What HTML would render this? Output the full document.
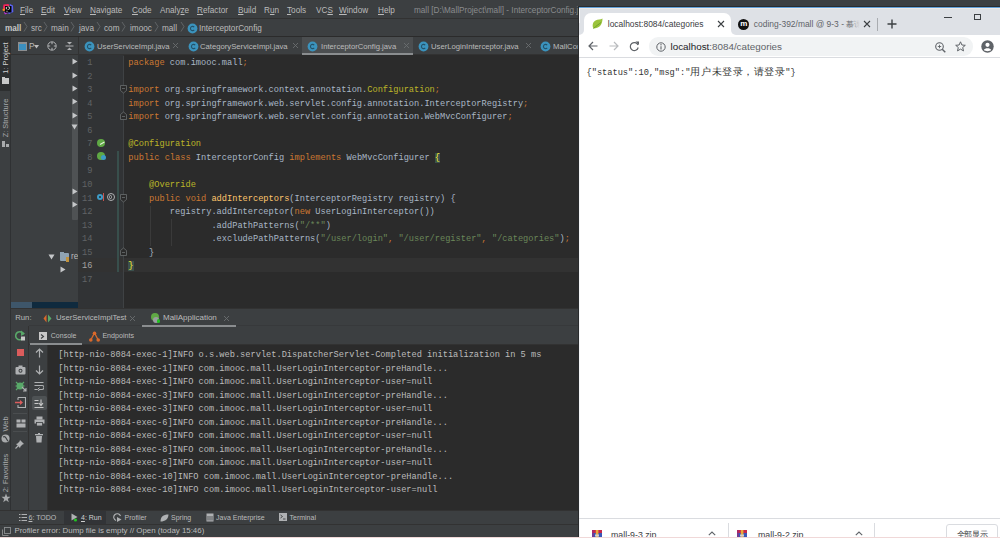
<!DOCTYPE html>
<html><head><meta charset="utf-8">
<style>
*{margin:0;padding:0;box-sizing:border-box}
html,body{width:1000px;height:540px;overflow:hidden;background:#fff}
body{position:relative;font-family:"Liberation Sans",sans-serif;font-size:8px;color:#bbbbbb}
.a{position:absolute}
.t{position:absolute;white-space:pre;line-height:10px}
.mono{font-family:"Liberation Mono",monospace}
/* IDE */
#ide{position:absolute;left:0;top:0;width:579px;height:537px;background:#3c3f41}
#menubar{left:0;top:0;width:1000px;height:19px;background:#3c3f41;border-bottom:1px solid #323232}
#crumbs{left:0;top:19px;width:579px;height:18px;background:#3c3f41;border-bottom:1px solid #2b2b2b}
.mi{top:6px;color:#bbbbbb;font-size:8.2px}
.cr{top:23.5px;color:#bbbbbb;font-size:8.2px}
.chev{top:21px;width:5px;height:10px}
#stripe{left:0;top:37px;width:11px;height:473px;background:#3c3f41;border-right:1px solid #2f3133}
#proj{left:11px;top:37px;width:67px;height:271px;background:#3c3f41}
#tabs{left:78px;top:37px;width:501px;height:18px;background:#3c3f41;border-bottom:1px solid #323232}
#gutter{left:78px;top:55px;width:46px;height:253px;background:#313335}
#editor{left:124px;top:55px;width:455px;height:253px;background:#2b2b2b}
.code{font-family:"Liberation Mono",monospace;font-size:8.667px;line-height:13.56px;white-space:pre;color:#a9b7c6}
.k{color:#cc7832}.an{color:#bbb529}.s{color:#6a8759}.fn{color:#ffc66d}
.brace{background:#3b514d;color:#ffef28}
.ln{font-family:"Liberation Mono",monospace;font-size:8.667px;line-height:13.56px;white-space:pre;color:#606366;text-align:right}
.tab{top:41.5px;font-size:7.7px;color:#bbbbbb}
.cic{width:10px;height:10px;border-radius:50%;background:#3d9cc7;color:#1e3f50;font-size:6px;line-height:10px;text-align:center;font-weight:bold}
.x{color:#6f7375;font-size:9px}
#runhdr{left:11px;top:308px;width:568px;height:18px;background:#3c3f41;border-top:1px solid #323232}
#tb1{left:11px;top:326px;width:18px;height:184px;background:#3c3f41;border-right:1px solid #323232}
#tb2{left:29px;top:345px;width:19px;height:165px;background:#3c3f41;border-right:1px solid #323232}
#conhdr{left:29px;top:325px;width:550px;height:20px;background:#3c3f41;border-bottom:1px solid #323232;border-top:1px solid #37393b}
#console{left:48px;top:345px;width:531px;height:165px;background:#2b2b2b}
.con{font-family:"Liberation Mono",monospace;font-size:8.667px;line-height:13.52px;white-space:pre;color:#bbbbbb}
#bottombar{left:0;top:510px;width:579px;height:14px;background:#3c3f41;border-top:1px solid #323232}
#status{left:0;top:524px;width:579px;height:13px;background:#3c3f41;border-top:1px solid #323232}
</style></head><body>
<div id="ide">
  <div class="a" id="menubar"></div>
  <div class="a" id="crumbs"></div>
  <svg class="a" style="left:1.5px;top:2.5px" width="12" height="12" viewBox="0 0 12 12">
    <path d="M1.5 1.5 L6.5 1 L8 4 L3 7 L1 5 Z" fill="#f5245c"/>
    <circle cx="1.8" cy="6.8" r="1.3" fill="#f98a1d"/>
    <path d="M7.5 0.8 L11 2.5 L11.3 9 L7 11 L5 9 L9 6 Z" fill="#5a62f2"/>
    <path d="M1.8 9 L3 11.5 L6 10 Z" fill="#b838d8"/>
    <rect x="3" y="3" width="6.5" height="6.5" fill="#000"/>
    <rect x="3.8" y="3.9" width="1" height="2.4" fill="#e0e0e0"/><path d="M5.6 3.9 H7.4 V5.8 Q7.4 6.4 6.6 6.4 H5.6" stroke="#e0e0e0" stroke-width="0.9" fill="none"/>
    <rect x="3.9" y="7.8" width="2.2" height="0.8" fill="#9a9a9a"/>
  </svg>
  <div class="t mi" style="left:20px"><u>F</u>ile</div>
  <div class="t mi" style="left:41px"><u>E</u>dit</div>
  <div class="t mi" style="left:64px"><u>V</u>iew</div>
  <div class="t mi" style="left:90px"><u>N</u>avigate</div>
  <div class="t mi" style="left:132px"><u>C</u>ode</div>
  <div class="t mi" style="left:160px">Analy<u>z</u>e</div>
  <div class="t mi" style="left:197px"><u>R</u>efactor</div>
  <div class="t mi" style="left:238px"><u>B</u>uild</div>
  <div class="t mi" style="left:264px">R<u>u</u>n</div>
  <div class="t mi" style="left:287px"><u>T</u>ools</div>
  <div class="t mi" style="left:316px">VC<u>S</u></div>
  <div class="t mi" style="left:339px"><u>W</u>indow</div>
  <div class="t mi" style="left:378px"><u>H</u>elp</div>
  <div class="t mi" style="left:414px;color:#8a8c8e">mall [D:\MallProject\mall] - InterceptorConfig.java - IntelliJ IDEA</div>

  <div class="t cr" style="left:5px;font-weight:bold;color:#c8c8c8">mall</div>
  <div class="t cr" style="left:31px">src</div>
  <div class="t cr" style="left:51px">main</div>
  <div class="t cr" style="left:79px">java</div>
  <div class="t cr" style="left:104px">com</div>
  <div class="t cr" style="left:130px">imooc</div>
  <div class="t cr" style="left:162px">mall</div>
  <svg class="a" style="left:0;top:19px" width="200" height="17">
   <g fill="none" stroke="#6a6d70" stroke-width="0.8">
    <path d="M24 3 L27 7.5 L24 12.5"/><path d="M44 3 L47 7.5 L44 12.5"/><path d="M71 3 L74 7.5 L71 12.5"/>
    <path d="M97 3 L100 7.5 L97 12.5"/><path d="M122 3 L125 7.5 L122 12.5"/><path d="M155 3 L158 7.5 L155 12.5"/>
    <path d="M181 3 L184 7.5 L181 12.5"/>
   </g></svg>
  <svg class="a" style="left:186.5px;top:22.5px" width="11" height="11"><circle cx="5.5" cy="5.5" r="4.9" fill="#3b93bd"/><path d="M7.2 4.2 A2.1 2.1 0 1 0 7.2 6.8" stroke="#23526a" stroke-width="1.1" fill="none"/></svg>
  <div class="t cr" style="left:199px">InterceptorConfig</div>

  <div class="a" id="stripe"></div>
  <div class="a" id="proj"></div>
  <div class="a" style="left:11px;top:37px;width:67px;height:18px;background:#3c3f41;border-bottom:1px solid #323232"></div>
  <div class="a" style="left:17.5px;top:41.5px;width:9px;height:9px;border:1px solid #8c8e90;background:#3b8fbf"></div>
  <div class="a" style="left:17.5px;top:41.5px;width:9px;height:2px;background:#8c8e90"></div>
  <div class="t" style="left:29px;top:42px;font-size:8.2px;color:#bbbbbb">P</div>
  <svg class="a" style="left:34px;top:45px" width="5" height="4"><path d="M0 0 H5 L2.5 3.5 Z" fill="#bbbbbb"/></svg>
  <svg class="a" style="left:46.5px;top:41px" width="10" height="10"><circle cx="5" cy="5" r="4.2" fill="none" stroke="#afb1b3" stroke-width="1"/><path d="M5 1 V3.2 M5 6.8 V9 M1 5 H3.2 M6.8 5 H9" stroke="#afb1b3" stroke-width="1.1"/></svg>
  <svg class="a" style="left:64.5px;top:41px" width="9" height="10"><path d="M0.5 5 H8.5" stroke="#afb1b3" stroke-width="1"/><path d="M2 1 H7 L4.5 3.5 Z M2 9 H7 L4.5 6.5 Z" fill="#afb1b3"/></svg>
  <div class="a" style="left:72px;top:102px;width:6px;height:118px;background:#4f5254;border-radius:1px"></div>
  <svg class="a" style="left:71.8px;top:58.0px" width="6" height="7"><path d="M0.5 0.5 L5.5 3.5 L0.5 6.5 Z" fill="#c4c6c8"/></svg>
  <svg class="a" style="left:71.8px;top:71.5px" width="6" height="7"><path d="M0.5 0.5 L5.5 3.5 L0.5 6.5 Z" fill="#c4c6c8"/></svg>
  <svg class="a" style="left:71.8px;top:85.0px" width="6" height="7"><path d="M0.5 0.5 L5.5 3.5 L0.5 6.5 Z" fill="#c4c6c8"/></svg>
  <svg class="a" style="left:71.8px;top:98.0px" width="6" height="7"><path d="M0.5 0.5 L5.5 3.5 L0.5 6.5 Z" fill="#c4c6c8"/></svg>
  <svg class="a" style="left:71.8px;top:111.5px" width="6" height="7"><path d="M0.5 0.5 L5.5 3.5 L0.5 6.5 Z" fill="#c4c6c8"/></svg>
  <svg class="a" style="left:71.3px;top:124.0px" width="7" height="6"><path d="M0.5 0.5 L6.5 0.5 L3.5 5.5 Z" fill="#c4c6c8"/></svg>
  <svg class="a" style="left:71.8px;top:188.0px" width="6" height="7"><path d="M0.5 0.5 L5.5 3.5 L0.5 6.5 Z" fill="#c4c6c8"/></svg>
  <svg class="a" style="left:71.8px;top:201.0px" width="6" height="7"><path d="M0.5 0.5 L5.5 3.5 L0.5 6.5 Z" fill="#c4c6c8"/></svg>
  <svg class="a" style="left:48.0px;top:254.0px" width="7" height="6"><path d="M0.5 0.5 L6.5 0.5 L3.5 5.5 Z" fill="#c4c6c8"/></svg>
  <div class="a" style="left:59.5px;top:252.5px;width:9px;height:8px;background:#8fa3b3;border-radius:1px"></div>
  <div class="a" style="left:59.5px;top:251.5px;width:4px;height:2px;background:#8fa3b3"></div>
  <div class="a" style="left:65.5px;top:256.5px;width:3.5px;height:5px;background:#c0923e"></div>
  <div class="t" style="left:71px;top:252px;font-size:8.2px;color:#bbbbbb">re</div>
  <svg class="a" style="left:59.5px;top:266.0px" width="6" height="7"><path d="M0.5 0.5 L5.5 3.5 L0.5 6.5 Z" fill="#c4c6c8"/></svg>
  <div class="a" style="left:11px;top:301.5px;width:67px;height:6px;background:#0f2a3e"></div>
  <div class="a" style="left:11px;top:301.5px;width:21px;height:6px;background:#3e566a"></div>
  <div class="a" style="left:0;top:37px;width:11px;height:54px;background:#2d2f30"></div>
  <div class="t" style="left:-19.5px;top:52.8px;width:50px;height:10px;font-size:7.4px;color:#d0d0d0;transform:rotate(-90deg);text-align:center">1: Project</div>
  <div class="a" style="left:1.5px;top:78px;width:7px;height:5.5px;background:#c8c8c8"></div>
  <div class="a" style="left:1.5px;top:77px;width:3px;height:2px;background:#c8c8c8"></div>
  <div class="t" style="left:-19.5px;top:113.3px;width:50px;height:10px;font-size:7.4px;color:#a8aaac;transform:rotate(-90deg);text-align:center">Z: Structure</div>
  <div class="a" style="left:2px;top:141px;width:3px;height:3px;background:#a8aaac"></div>
  <div class="a" style="left:5.5px;top:144px;width:3px;height:3px;background:#a8aaac"></div>
  <div class="a" style="left:2px;top:144px;width:3px;height:3px;background:#a8aaac"></div>
  <div class="t" style="left:-9.5px;top:418.5px;width:30px;height:10px;font-size:7.4px;color:#a8aaac;transform:rotate(-90deg);text-align:center">Web</div>
  <svg class="a" style="left:1px;top:434px" width="9" height="9"><circle cx="4.5" cy="4.5" r="4" fill="#a8aaac"/><path d="M2 3 Q4 2 5 4 T7 7" stroke="#3c3f41" stroke-width="1.2" fill="none"/></svg>
  <div class="t" style="left:-19.5px;top:467.6px;width:50px;height:10px;font-size:7.4px;color:#a8aaac;transform:rotate(-90deg);text-align:center">2: Favorites</div>
  <svg class="a" style="left:0.5px;top:493px" width="10" height="10"><path d="M5 0.5 L6.2 3.8 L9.5 3.8 L6.8 5.9 L7.8 9.3 L5 7.2 L2.2 9.3 L3.2 5.9 L0.5 3.8 L3.8 3.8 Z" fill="#a8aaac"/></svg>
  <div class="a" id="tabs"></div>
  <div class="a" style="left:78px;top:37px;width:1px;height:18px;background:#323232"></div>
  <div class="a" style="left:302px;top:37px;width:111px;height:18px;background:#4b4e50"></div>
  <div class="a" style="left:302px;top:53px;width:111px;height:2px;background:#8a8d8f"></div>
  <svg class="a" style="left:83.5px;top:40.5px" width="11" height="11"><circle cx="5.5" cy="5.5" r="4.9" fill="#3b93bd"/><path d="M7.2 4.2 A2.1 2.1 0 1 0 7.2 6.8" stroke="#23526a" stroke-width="1.1" fill="none"/></svg>
  <div class="t tab" style="left:97px">UserServiceImpl.java</div>
  <svg class="a" style="left:172.1px;top:41.9px" width="7.0" height="7.0"><path d="M1 1 L6.0 6.0 M6.0 1 L1 6.0" stroke="#6b6e70" stroke-width="0.9"/></svg>
  <svg class="a" style="left:187.5px;top:40.5px" width="11" height="11"><circle cx="5.5" cy="5.5" r="4.9" fill="#3b93bd"/><path d="M7.2 4.2 A2.1 2.1 0 1 0 7.2 6.8" stroke="#23526a" stroke-width="1.1" fill="none"/></svg>
  <div class="t tab" style="left:200px">CategoryServiceImpl.java</div>
  <svg class="a" style="left:292.0px;top:41.9px" width="7.0" height="7.0"><path d="M1 1 L6.0 6.0 M6.0 1 L1 6.0" stroke="#6b6e70" stroke-width="0.9"/></svg>
  <svg class="a" style="left:306.5px;top:40.5px" width="11" height="11"><circle cx="5.5" cy="5.5" r="4.9" fill="#3b93bd"/><path d="M7.2 4.2 A2.1 2.1 0 1 0 7.2 6.8" stroke="#23526a" stroke-width="1.1" fill="none"/></svg>
  <div class="t tab" style="left:321px">InterceptorConfig.java</div>
  <svg class="a" style="left:402.5px;top:41.9px" width="7.0" height="7.0"><path d="M1 1 L6.0 6.0 M6.0 1 L1 6.0" stroke="#6b6e70" stroke-width="0.9"/></svg>
  <svg class="a" style="left:417.5px;top:40.5px" width="11" height="11"><circle cx="5.5" cy="5.5" r="4.9" fill="#3b93bd"/><path d="M7.2 4.2 A2.1 2.1 0 1 0 7.2 6.8" stroke="#23526a" stroke-width="1.1" fill="none"/></svg>
  <div class="t tab" style="left:431px">UserLoginInterceptor.java</div>
  <svg class="a" style="left:524.5px;top:41.9px" width="7.0" height="7.0"><path d="M1 1 L6.0 6.0 M6.0 1 L1 6.0" stroke="#6b6e70" stroke-width="0.9"/></svg>
  <svg class="a" style="left:539.5px;top:40.5px" width="11" height="11"><circle cx="5.5" cy="5.5" r="4.9" fill="#3b93bd"/><path d="M7.2 4.2 A2.1 2.1 0 1 0 7.2 6.8" stroke="#23526a" stroke-width="1.1" fill="none"/></svg>
  <div class="t tab" style="left:553px">MallConfig.java</div>

  <div class="a" id="gutter"></div>
  <div class="a" id="editor"></div>
  <div class="a" style="left:78px;top:258.3px;width:501px;height:13.6px;background:#323232"></div>
  <div class="a" style="left:123px;top:56.00px;width:1px;height:253px;background:#3f4244"></div>
  <div class="a" style="left:117px;top:151.00px;width:1.5px;height:121px;background:#384f4c"></div>
  <div class="a" style="left:150px;top:205.70px;width:1px;height:40.7px;background:#3a3a3a"></div>
  <div class="a" style="left:170.5px;top:219.20px;width:1px;height:27.1px;background:#3a3a3a"></div>
  <div class="a ln" style="left:78px;width:14.5px;top:57.00px;color:#606366">1</div>
  <div class="a code" style="left:128.3px;top:57.00px"><span class="k">package</span> com.imooc.mall<span class="k">;</span></div>
  <div class="a ln" style="left:78px;width:14.5px;top:70.56px;color:#606366">2</div>
  <div class="a ln" style="left:78px;width:14.5px;top:84.12px;color:#606366">3</div>
  <div class="a code" style="left:128.3px;top:84.12px"><span class="k">import</span> org.springframework.context.annotation.<span class="an">Configuration</span><span class="k">;</span></div>
  <div class="a ln" style="left:78px;width:14.5px;top:97.68px;color:#606366">4</div>
  <div class="a code" style="left:128.3px;top:97.68px"><span class="k">import</span> org.springframework.web.servlet.config.annotation.InterceptorRegistry<span class="k">;</span></div>
  <div class="a ln" style="left:78px;width:14.5px;top:111.24px;color:#606366">5</div>
  <div class="a code" style="left:128.3px;top:111.24px"><span class="k">import</span> org.springframework.web.servlet.config.annotation.WebMvcConfigurer<span class="k">;</span></div>
  <div class="a ln" style="left:78px;width:14.5px;top:124.80px;color:#606366">6</div>
  <div class="a ln" style="left:78px;width:14.5px;top:138.36px;color:#606366">7</div>
  <div class="a code" style="left:128.3px;top:138.36px"><span class="an">@Configuration</span></div>
  <div class="a ln" style="left:78px;width:14.5px;top:151.92px;color:#606366">8</div>
  <div class="a code" style="left:128.3px;top:151.92px"><span class="k">public class</span> InterceptorConfig <span class="k">implements</span> WebMvcConfigurer <span class="brace">{</span></div>
  <div class="a ln" style="left:78px;width:14.5px;top:165.48px;color:#606366">9</div>
  <div class="a ln" style="left:78px;width:14.5px;top:179.04px;color:#606366">10</div>
  <div class="a code" style="left:128.3px;top:179.04px">    <span class="an">@Override</span></div>
  <div class="a ln" style="left:78px;width:14.5px;top:192.60px;color:#606366">11</div>
  <div class="a code" style="left:128.3px;top:192.60px">    <span class="k">public void</span> <span class="fn">addInterceptors</span>(InterceptorRegistry registry) {</div>
  <div class="a ln" style="left:78px;width:14.5px;top:206.16px;color:#606366">12</div>
  <div class="a code" style="left:128.3px;top:206.16px">        registry.addInterceptor(<span class="k">new</span> UserLoginInterceptor())</div>
  <div class="a ln" style="left:78px;width:14.5px;top:219.72px;color:#606366">13</div>
  <div class="a code" style="left:128.3px;top:219.72px">                .addPathPatterns(<span class="s">"/**"</span>)</div>
  <div class="a ln" style="left:78px;width:14.5px;top:233.28px;color:#606366">14</div>
  <div class="a code" style="left:128.3px;top:233.28px">                .excludePathPatterns(<span class="s">"/user/login"</span><span class="k">, </span><span class="s">"/user/register"</span><span class="k">, </span><span class="s">"/categories"</span>)<span class="k">;</span></div>
  <div class="a ln" style="left:78px;width:14.5px;top:246.84px;color:#606366">15</div>
  <div class="a code" style="left:128.3px;top:246.84px">    }</div>
  <div class="a ln" style="left:78px;width:14.5px;top:260.40px;color:#a4a3a3">16</div>
  <div class="a code" style="left:128.3px;top:260.40px"><span class="brace">}</span></div>
  <div class="a ln" style="left:78px;width:14.5px;top:273.96px;color:#606366">17</div>
  <svg class="a" style="left:119.5px;top:85.4px" width="8" height="9"><path d="M0.5 0.5 H6.5 V5.5 L3.5 8 L0.5 5.5 Z" fill="#2b2b2b" stroke="#6b6e70" stroke-width="0.8"/><path d="M2 3.5 H5" stroke="#6b6e70" stroke-width="0.8"/></svg>
  <svg class="a" style="left:119.5px;top:111px" width="8" height="9"><path d="M0.5 8.5 H6.5 V3.5 L3.5 1 L0.5 3.5 Z" fill="#2b2b2b" stroke="#6b6e70" stroke-width="0.8"/><path d="M2 5.5 H5" stroke="#6b6e70" stroke-width="0.8"/></svg>
  <svg class="a" style="left:119.5px;top:193.9px" width="8" height="9"><path d="M0.5 0.5 H6.5 V5.5 L3.5 8 L0.5 5.5 Z" fill="#2b2b2b" stroke="#6b6e70" stroke-width="0.8"/><path d="M2 3.5 H5" stroke="#6b6e70" stroke-width="0.8"/></svg>
  <svg class="a" style="left:119.5px;top:246.6px" width="8" height="9"><path d="M0.5 8.5 H6.5 V3.5 L3.5 1 L0.5 3.5 Z" fill="#2b2b2b" stroke="#6b6e70" stroke-width="0.8"/><path d="M2 5.5 H5" stroke="#6b6e70" stroke-width="0.8"/></svg>
  <div class="a" style="left:96.5px;top:138.6px;width:8.5px;height:8.5px;border-radius:50%;background:#5fa844"></div>
  <div class="a" style="left:99px;top:139.6px;width:5px;height:4px;border-bottom:1px solid #e8f3e0;transform:rotate(-30deg)"></div>
  <div class="a" style="left:96.5px;top:151.9px;width:8.5px;height:8.5px;border-radius:50%;background:#5fa844"></div>
  <div class="a" style="left:101px;top:155.2px;width:5px;height:5px;border-radius:50%;background:#3d9cc7"></div>
  <div class="a" style="left:96.5px;top:193.9px;width:6.5px;height:6.5px;border-radius:50%;background:#3d9cc7"></div>
  <div class="a" style="left:98.5px;top:195.9px;width:2.5px;height:2.5px;border-radius:50%;background:#2b2b2b"></div>
  <div class="a" style="left:103px;top:192.9px;width:1.3px;height:8px;background:#c75450"></div>
  <div class="a" style="left:106.5px;top:192.9px;width:8px;height:8px;border-radius:50%;border:1px solid #afb1b3"></div>
  <div class="a" style="left:108.7px;top:195.1px;width:3.6px;height:3.6px;border-radius:50%;border:1px solid #afb1b3"></div>
  <div class="a" id="runhdr"></div>
  <div class="a" id="conhdr"></div>
  <div class="a" id="tb1"></div>
  <div class="a" id="tb2"></div>
  <div class="a" id="console"></div>
  <div class="a" id="bottombar"></div>
  <div class="a" id="status"></div>
  <div class="t" style="left:15.3px;top:313.2px;font-size:7.7px;color:#bbbbbb">Run:</div>
  <svg class="a" style="left:43px;top:313.5px" width="9" height="9"><path d="M3.5 0.5 L0.5 4.5 L3.5 8.5 Z" fill="#d9692b"/><path d="M5 0.5 L8.5 4.5 L5 8.5 Z" fill="#59a869"/></svg>
  <div class="t" style="left:56px;top:313.2px;font-size:7.7px;color:#bbbbbb">UserServiceImplTest</div>
  <svg class="a" style="left:128.9px;top:314.5px" width="7.0" height="7.0"><path d="M1 1 L6.0 6.0 M6.0 1 L1 6.0" stroke="#6b6e70" stroke-width="0.9"/></svg>
  <div class="a" style="left:150.5px;top:313px;width:8px;height:8px;border-radius:50%;background:#5fa844"></div>
  <div class="a" style="left:153px;top:316.5px;width:6px;height:6px;border-radius:50%;background:#9a9da0"></div>
  <div class="a" style="left:156.5px;top:319px;width:3.5px;height:3.5px;border-radius:50%;background:#22c322"></div>
  <div class="t" style="left:163px;top:313.2px;font-size:8px;color:#bbbbbb">MallApplication</div>
  <svg class="a" style="left:223.2px;top:314.5px" width="7.0" height="7.0"><path d="M1 1 L6.0 6.0 M6.0 1 L1 6.0" stroke="#6b6e70" stroke-width="0.9"/></svg>
  <div class="a" style="left:142px;top:324.5px;width:94px;height:2px;background:#8a8d8f"></div>
  <div class="a" style="left:38.5px;top:332px;width:8.5px;height:8px;background:#c8c8c8"></div>
  <svg class="a" style="left:40px;top:333.5px" width="5" height="5"><path d="M1 0.5 L3.5 2.5 L1 4.5" stroke="#3c3f41" stroke-width="1.1" fill="none"/></svg>
  <div class="t" style="left:50.8px;top:330.5px;font-size:7px;color:#bbbbbb">Console</div>
  <svg class="a" style="left:89px;top:331px" width="11" height="11"><path d="M1.5 9.5 L5.5 2 L9.5 9.5" stroke="#d9692b" stroke-width="1.3" fill="none"/><circle cx="5.5" cy="2.2" r="1.8" fill="#d9692b"/><circle cx="1.8" cy="9" r="1.8" fill="#d9692b"/><circle cx="9.2" cy="9" r="1.8" fill="#d9692b"/></svg>
  <div class="t" style="left:102.4px;top:330.5px;font-size:7.1px;color:#bbbbbb">Endpoints</div>
  <div class="a" style="left:30px;top:343px;width:52px;height:1.5px;background:#8a8d8f"></div>
  <svg class="a" style="left:15px;top:330px" width="11" height="11"><path d="M8.5 4.5 A4 4 0 1 0 8 8" stroke="#59a869" stroke-width="1.6" fill="none"/><path d="M6 0.5 L10 3.5 L6 6 Z" fill="#59a869"/><rect x="6" y="6.5" width="4" height="4" fill="#c8c8c8"/></svg>
  <div class="a" style="left:16.5px;top:348.5px;width:7.5px;height:7.5px;background:#db5c5c"></div>
  <svg class="a" style="left:15px;top:364.5px" width="11" height="10"><rect x="0.5" y="2" width="10" height="7.5" rx="1" fill="#afb1b3"/><rect x="3.5" y="0.5" width="4" height="2.5" fill="#afb1b3"/><circle cx="5.5" cy="5.8" r="2" fill="#3c3f41"/><circle cx="5.5" cy="5.8" r="1" fill="#afb1b3"/></svg>
  <svg class="a" style="left:14.5px;top:380px" width="12" height="12"><circle cx="5" cy="6" r="3.5" fill="#59a869"/><path d="M1 2 L3 4 M9 2 L7 4 M0.5 6 H2 M8 6 H9.5 M1 10 L3 8" stroke="#59a869" stroke-width="1.2"/><path d="M7 7 L11 11 M8 11 H11 V8" stroke="#afb1b3" stroke-width="1.1" fill="none"/></svg>
  <svg class="a" style="left:15px;top:397px" width="11" height="11"><path d="M3 0.5 H10.5 V10.5 H3 V8 M3 3 V0.5" stroke="#afb1b3" stroke-width="1.1" fill="none"/><path d="M0 5.5 H7" stroke="#db5c5c" stroke-width="1.5"/><path d="M5 3 L8 5.5 L5 8 Z" fill="#db5c5c"/></svg>
  <div class="a" style="left:13px;top:413px;width:14px;height:1px;background:#4a4d4f"></div>
  <svg class="a" style="left:15.5px;top:419px" width="10" height="9"><rect x="0.5" y="0.5" width="4" height="3" fill="#afb1b3"/><rect x="5.5" y="0.5" width="4" height="3" fill="#afb1b3"/><rect x="0.5" y="4.5" width="9" height="4" fill="#afb1b3"/></svg>
  <div class="a" style="left:13px;top:431px;width:14px;height:1px;background:#4a4d4f"></div>
  <svg class="a" style="left:15px;top:439px" width="10" height="10"><path d="M5 1 L9 5 L7.5 5.5 L5.5 7.5 L5 9 L1 5 L2.5 4.5 L4.5 2.5 Z" fill="#afb1b3"/><path d="M3 7 L0.5 9.5" stroke="#afb1b3" stroke-width="1.1"/></svg>
  <svg class="a" style="left:34.5px;top:347.5px" width="9" height="10"><path d="M4.5 1 V9.5 M1 4.5 L4.5 1 L8 4.5" stroke="#afb1b3" stroke-width="1.2" fill="none"/></svg>
  <svg class="a" style="left:34.5px;top:364.5px" width="9" height="10"><path d="M4.5 0.5 V9 M1 5.5 L4.5 9 L8 5.5" stroke="#afb1b3" stroke-width="1.2" fill="none"/></svg>
  <svg class="a" style="left:34px;top:381px" width="10" height="10"><path d="M0.5 1.5 H9.5 M0.5 4.5 H8 A2 2 0 0 1 8 8.5 H5 M0.5 8.5 H3" stroke="#afb1b3" stroke-width="1.1" fill="none"/><path d="M5.5 6.5 L3.5 8.5 L5.5 10" stroke="#afb1b3" stroke-width="1" fill="none"/></svg>
  <div class="a" style="left:31.5px;top:396px;width:15px;height:14px;background:#4e5254;border-radius:2px"></div>
  <svg class="a" style="left:34px;top:398.5px" width="10" height="10"><path d="M0.5 1.5 H4.5 M0.5 4.5 H4.5 M0.5 8.5 H9.5" stroke="#c8c8c8" stroke-width="1.1"/><path d="M7 0.5 V6 M5 4 L7 6.5 L9 4" stroke="#c8c8c8" stroke-width="1.1" fill="none"/></svg>
  <svg class="a" style="left:33.5px;top:416px" width="11" height="10"><rect x="2.5" y="0.5" width="6" height="3" fill="#afb1b3"/><rect x="0.5" y="3.5" width="10" height="4" fill="#afb1b3"/><rect x="2.5" y="6.5" width="6" height="3.5" fill="#afb1b3" stroke="#3c3f41" stroke-width="0.8"/></svg>
  <svg class="a" style="left:35px;top:432.5px" width="8" height="10"><rect x="0" y="1" width="8" height="1.3" fill="#afb1b3"/><rect x="3" y="0" width="2" height="1.2" fill="#afb1b3"/><path d="M1 3 H7 L6.5 9.5 H1.5 Z" fill="#afb1b3"/></svg>
  <div class="a con" style="left:58.3px;top:349.3px">[http-nio-8084-exec-1]INFO o.s.web.servlet.DispatcherServlet-Completed initialization in 5 ms
[http-nio-8084-exec-1]INFO com.imooc.mall.UserLoginInterceptor-preHandle...
[http-nio-8084-exec-1]INFO com.imooc.mall.UserLoginInterceptor-user=null
[http-nio-8084-exec-3]INFO com.imooc.mall.UserLoginInterceptor-preHandle...
[http-nio-8084-exec-3]INFO com.imooc.mall.UserLoginInterceptor-user=null
[http-nio-8084-exec-6]INFO com.imooc.mall.UserLoginInterceptor-preHandle...
[http-nio-8084-exec-6]INFO com.imooc.mall.UserLoginInterceptor-user=null
[http-nio-8084-exec-8]INFO com.imooc.mall.UserLoginInterceptor-preHandle...
[http-nio-8084-exec-8]INFO com.imooc.mall.UserLoginInterceptor-user=null
[http-nio-8084-exec-10]INFO com.imooc.mall.UserLoginInterceptor-preHandle...
[http-nio-8084-exec-10]INFO com.imooc.mall.UserLoginInterceptor-user=null</div>
  <svg class="a" style="left:19px;top:513px" width="8" height="9"><path d="M0 1.5 H1.5 M2.5 1.5 H8 M0 4.5 H1.5 M2.5 4.5 H8 M0 7.5 H1.5 M2.5 7.5 H8" stroke="#afb1b3" stroke-width="1.2"/></svg>
  <div class="t" style="left:28.5px;top:513px;font-size:7px;color:#bbbbbb"><u>6</u>: TODO</div>
  <div class="a" style="left:64px;top:511px;width:42px;height:13px;background:#323437"></div>
  <svg class="a" style="left:70.5px;top:513px" width="8" height="9"><path d="M0.5 0.5 L6.5 4 L0.5 7.5 Z" fill="#afb1b3"/><circle cx="4.5" cy="7" r="1.6" fill="#22c322"/></svg>
  <div class="t" style="left:81px;top:513px;font-size:7px;color:#d0d0d0"><u>4</u>: Run</div>
  <svg class="a" style="left:113px;top:512.5px" width="9" height="10"><path d="M7.5 3 A3.5 3.5 0 1 0 3 7.5" stroke="#afb1b3" stroke-width="1.1" fill="none"/><path d="M4 4 L8.5 6.5 L4 9 Z" fill="#afb1b3"/></svg>
  <div class="t" style="left:124.5px;top:513px;font-size:7px;color:#bbbbbb">Profiler</div>
  <svg class="a" style="left:160px;top:513.5px" width="9" height="8"><path d="M8.5 0.5 C3 0.5 0.5 3 0.5 7.5 C5 7.5 8.5 5 8.5 0.5 Z" fill="#afb1b3"/></svg>
  <div class="t" style="left:171px;top:513px;font-size:7px;color:#bbbbbb">Spring</div>
  <svg class="a" style="left:205.5px;top:513px" width="8" height="9"><rect x="0.5" y="0.5" width="7" height="8" fill="#afb1b3"/><path d="M2 3 V7.5 M4 3 V7.5 M6 3 V7.5" stroke="#3c3f41" stroke-width="0.8"/></svg>
  <div class="t" style="left:216px;top:513px;font-size:7px;color:#bbbbbb">Java Enterprise</div>
  <svg class="a" style="left:279px;top:513px" width="8" height="8"><rect x="0" y="0" width="8" height="8" fill="#afb1b3"/><path d="M1.5 2 L3.5 3.5 L1.5 5 M4 6 H6.5" stroke="#3c3f41" stroke-width="0.9" fill="none"/></svg>
  <div class="t" style="left:289.5px;top:513px;font-size:7px;color:#bbbbbb">Terminal</div>
  <svg class="a" style="left:2px;top:526.5px" width="9" height="9"><rect x="2.5" y="0.5" width="6" height="6" fill="none" stroke="#8c8e90" stroke-width="0.9"/><path d="M0.5 2.5 V8.5 H6.5" stroke="#8c8e90" stroke-width="0.9" fill="none"/></svg>
  <div class="t" style="left:14.4px;top:526.2px;font-size:7.9px;color:#bbbbbb">Profiler error: Dump file is empty // Open (today 15:46)</div>
</div>
<div id="br" class="a" style="left:578px;top:6px;width:422px;height:531px;background:#fff;overflow:hidden">
  <div class="a" style="left:0;top:0;width:1px;height:531px;background:#2a2c2e"></div>
  <div class="a" style="left:0;top:0;width:422px;height:1px;background:#2a2c2e"></div>
  <div class="a" style="left:1px;top:1px;width:421px;height:1.4px;background:#62a0d8"></div>
  <div class="a" style="left:1px;top:2.4px;width:421px;height:0.8px;background:#efe9e6"></div>
  <div class="a" style="left:1px;top:3px;width:421px;height:25.6px;background:#dee1e6"></div>
  <div class="a" style="left:1px;top:3px;width:1px;height:528px;background:#f4f5f7"></div>
  <!-- active tab -->
  <div class="a" style="left:5.5px;top:7px;width:147px;height:22px;background:#fff;border-radius:7px 7px 0 0"></div>
  <div class="a" style="left:1px;top:22.6px;width:5px;height:6px;background:#fff"></div>
  <div class="a" style="left:1px;top:16.6px;width:4.5px;height:12px;background:#dee1e6;border-radius:0 0 5px 0"></div>
  <div class="a" style="left:152px;top:22.6px;width:6px;height:6px;background:#fff"></div>
  <div class="a" style="left:152.5px;top:16.6px;width:6px;height:12px;background:#dee1e6;border-radius:0 0 0 5px"></div>
  <svg class="a" style="left:14px;top:12px" width="11" height="11"><path d="M10.5 0.5 C10.5 7 7 10.5 1.5 10.5 C0 8 0.5 4 3.5 2.5 C6 1.2 8.5 1.8 10.5 0.5 Z" fill="#9bc43c"/><path d="M1.5 10.5 C4 8 6.5 6.5 9 4.5" stroke="#6a9b2a" stroke-width="0.9" fill="none"/></svg>
  <div class="t" style="left:29.8px;top:12.8px;font-size:8.45px;color:#3c4043">localhost:8084/categories</div>
  <svg class="a" style="left:139px;top:14px" width="8" height="8"><path d="M1 1 L7 7 M7 1 L1 7" stroke="#3c4043" stroke-width="1.1"/></svg>
  <!-- inactive tab -->
  <div class="a" style="left:160px;top:12.5px;width:11px;height:11px;border-radius:50%;background:#111"></div>
  <div class="t" style="left:162.3px;top:13px;font-size:8px;font-weight:bold;color:#fff">m</div>
  <div class="t" style="left:175.8px;top:13.3px;font-size:8.45px;color:#5f6368">coding-392/mall @ 9-3 - 慕课</div>
  <div class="a" style="left:272px;top:9px;width:14px;height:18px;background:linear-gradient(to right,rgba(222,225,230,0),#dee1e6 70%)"></div>
  <svg class="a" style="left:285px;top:14px" width="8" height="8"><path d="M1 1 L7 7 M7 1 L1 7" stroke="#3c4043" stroke-width="1.1"/></svg>
  <div class="a" style="left:298.5px;top:12px;width:1px;height:13px;background:#a9acb0"></div>
  <svg class="a" style="left:308.5px;top:13px" width="10" height="10"><path d="M5 0.5 V9.5 M0.5 5 H9.5" stroke="#3c4043" stroke-width="1.4"/></svg>
  <!-- window controls -->
  <div class="a" style="left:366px;top:11px;width:8px;height:1px;background:#3c4043"></div>
  <div class="a" style="left:396.2px;top:8.2px;width:6.5px;height:6px;border:1px solid #3c4043"></div>
  <!-- toolbar -->
  <div class="a" style="left:1px;top:28.6px;width:421px;height:23.4px;background:#fff;border-bottom:1px solid #dadce0"></div>
  <svg class="a" style="left:10px;top:35px" width="10" height="10"><path d="M9.5 5 H1 M5 1 L1 5 L5 9" stroke="#5f6368" stroke-width="1.2" fill="none"/></svg>
  <svg class="a" style="left:31px;top:35px" width="10" height="10"><path d="M0.5 5 H9 M5 1 L9 5 L5 9" stroke="#b9bbbe" stroke-width="1.2" fill="none"/></svg>
  <svg class="a" style="left:51px;top:34.5px" width="11" height="11"><path d="M9 4 A4 4 0 1 0 9.2 6.5" stroke="#5f6368" stroke-width="1.2" fill="none"/><path d="M6.5 0.5 H10 V4 Z" fill="#5f6368"/></svg>
  <div class="a" style="left:71px;top:31.4px;width:323.5px;height:18.2px;background:#f1f3f4;border-radius:9.1px"></div>
  <svg class="a" style="left:77.5px;top:35.5px" width="10" height="10"><circle cx="5" cy="5" r="4.2" stroke="#5f6368" stroke-width="1" fill="none"/><path d="M5 4.2 V7.5" stroke="#5f6368" stroke-width="1.1"/><circle cx="5" cy="2.8" r="0.7" fill="#5f6368"/></svg>
  <div class="t" style="left:92.5px;top:35.5px;font-size:9.84px;color:#202124">localhost<span style="color:#5f6368">:8084/categories</span></div>
  <svg class="a" style="left:357px;top:35.5px" width="11" height="11"><circle cx="4.5" cy="4.5" r="3.8" stroke="#5f6368" stroke-width="1.1" fill="none"/><path d="M7.2 7.2 L10.3 10.3" stroke="#5f6368" stroke-width="1.4"/><path d="M4.5 2.8 V6.2 M2.8 4.5 H6.2" stroke="#5f6368" stroke-width="0.9"/></svg>
  <svg class="a" style="left:377px;top:35px" width="11" height="11"><path d="M5.5 0.8 L6.9 4 L10.3 4.3 L7.7 6.5 L8.5 9.9 L5.5 8.1 L2.5 9.9 L3.3 6.5 L0.7 4.3 L4.1 4 Z" stroke="#5f6368" stroke-width="1" fill="none" stroke-linejoin="round"/></svg>
  <svg class="a" style="left:402.5px;top:33.5px" width="13" height="13"><circle cx="6.5" cy="6.5" r="6.2" fill="#5f6368"/><circle cx="6.5" cy="4.8" r="2.1" fill="#fff"/><path d="M2.8 10 C3.8 7.8 9.2 7.8 10.2 10 C9 11.5 4 11.5 2.8 10 Z" fill="#fff"/></svg>
  <!-- page content -->
  <div class="t" style="left:8.5px;top:60px;font-family:'Liberation Mono',monospace;font-size:8.67px;line-height:12px;color:#333">{"status":10,"msg":"<span style="font-size:10.4px;line-height:12px;vertical-align:-0.5px;letter-spacing:0.55px">用户未登录，请登录</span>"}</div>
  <!-- download shelf -->
  <div class="a" style="left:1px;top:512px;width:421px;height:1px;background:#dadce0"></div>
  <svg class="a" style="left:14px;top:523.5px" width="10" height="10"><rect x="0" y="0" width="10" height="3" fill="#c8284a"/><rect x="0" y="3" width="10" height="4.5" fill="#3a55b8"/><rect x="0" y="7.5" width="10" height="2.5" fill="#3a9a3a"/><rect x="0" y="0" width="2" height="10" fill="#9a2a7a" opacity="0.6"/><rect x="3.8" y="0" width="2.6" height="9" fill="#e8a93b"/><rect x="3" y="4.5" width="4" height="2" fill="#d0d0d0"/></svg>
  <div class="t" style="left:33px;top:523.5px;font-size:8.8px;color:#3c4043">mall-9-3.zip</div>
  <svg class="a" style="left:130px;top:525px" width="8" height="5"><path d="M0.8 4.2 L4 1 L7.2 4.2" stroke="#5f6368" stroke-width="1.1" fill="none"/></svg>
  <div class="a" style="left:149.5px;top:516.5px;width:1px;height:18px;background:#dadce0"></div>
  <svg class="a" style="left:158.5px;top:523.5px" width="10" height="10"><rect x="0" y="0" width="10" height="3" fill="#c8284a"/><rect x="0" y="3" width="10" height="4.5" fill="#3a55b8"/><rect x="0" y="7.5" width="10" height="2.5" fill="#3a9a3a"/><rect x="0" y="0" width="2" height="10" fill="#9a2a7a" opacity="0.6"/><rect x="3.8" y="0" width="2.6" height="9" fill="#e8a93b"/><rect x="3" y="4.5" width="4" height="2" fill="#d0d0d0"/></svg>
  <div class="t" style="left:180px;top:523.5px;font-size:8.8px;color:#3c4043">mall-9-2.zip</div>
  <svg class="a" style="left:277px;top:525px" width="8" height="5"><path d="M0.8 4.2 L4 1 L7.2 4.2" stroke="#5f6368" stroke-width="1.1" fill="none"/></svg>
  <div class="a" style="left:296px;top:516.5px;width:1px;height:18px;background:#dadce0"></div>
  <div class="a" style="left:368px;top:517.5px;width:52px;height:20px;border:1px solid #dadce0;border-radius:3px;background:#fff"></div>
  <div class="t" style="left:378.5px;top:524px;font-size:8px;letter-spacing:-0.2px;color:#3c4043">全部显示</div>
</div>
<div class="a" style="left:0;top:537px;width:1000px;height:3px;background:#fff"></div>
<div class="a" style="left:0;top:536.8px;width:1000px;height:0.6px;background:#f0d8d8"></div>

</body></html>
